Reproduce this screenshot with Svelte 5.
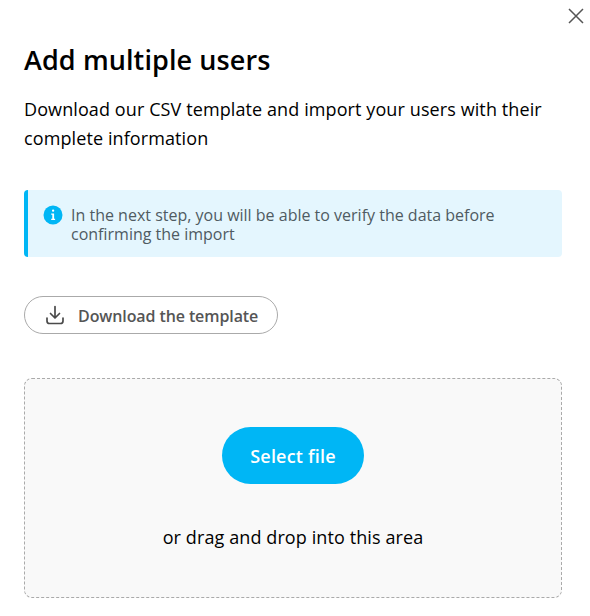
<script>
  const title = 'Add multiple users';
</script>

<div class="dialog">
  <button class="close" aria-label="Close">
    <svg width="16" height="16" viewBox="0 0 16 16"><path d="M1 1l14 14M15 1L1 15" stroke="#555" stroke-width="1.5" fill="none" /></svg>
  </button>
  <h1>{title}</h1>
  <p class="intro">Download our CSV template and import your users with their complete information</p>

  <div class="info">
    <svg class="info-icon" width="20" height="20" viewBox="0 0 20 20">
      <circle cx="10" cy="10" r="9.5" fill="#00b6f5" />
      <rect x="9" y="4.6" width="2.2" height="2.2" rx="1" fill="#fff" />
      <path d="M8.2 8.6h2.9v5.2h1v1.2H8.2v-1.2h1.1V9.8H8.2z" fill="#fff" />
    </svg>
    <span>In the next step, you will be able to verify the data before confirming the import</span>
  </div>

  <button class="download">
    <svg width="20" height="20" viewBox="0 0 20 20" fill="none" stroke="#4a4a4a" stroke-width="1.7" stroke-linecap="round" stroke-linejoin="round">
      <path d="M10 1.5v11M5.5 8.5l4.5 4.5 4.5-4.5" />
      <path d="M2 13v3a2.5 2.5 0 0 0 2.5 2.5h11A2.5 2.5 0 0 0 18 16v-3" />
    </svg>
    <span>Download the template</span>
  </button>

  <div class="drop">
    <button class="select">Select file</button>
    <p>or drag and drop into this area</p>
  </div>
</div>

<style>
  :global(body) {
    background: #fff;
  }

  .dialog {
    position: relative;
    box-sizing: border-box;
    height: 616px;
    padding: 41px 28px 18px 24px;
    font-family: "Open Sans", "Noto Sans", sans-serif;
    color: #000;
    overflow: hidden;
  }

  .close {
    position: absolute;
    top: 8px;
    right: 6px;
    padding: 0;
    border: none;
    background: none;
    line-height: 0;
  }

  h1 {
    margin: 0;
    font-size: 27px;
    line-height: 38px;
    font-weight: 600;
    letter-spacing: 0.1px;
  }

  .intro {
    margin: 16px 0 0;
    font-size: 18px;
    line-height: 29px;
    letter-spacing: 0.1px;
  }

  .info {
    display: flex;
    gap: 8px;
    margin-top: 37px;
    padding: 16px 20px 13px 15px;
    background: #e4f6fe;
    border-left: 4px solid #00b6f5;
    border-radius: 4px;
    font-size: 16px;
    line-height: 19px;
    color: #4f5b62;
  }

  .info-icon {
    flex: none;
    margin-top: -1px;
  }

  .download {
    display: flex;
    align-items: center;
    gap: 13px;
    box-sizing: border-box;
    width: 254px;
    height: 38px;
    margin-top: 39px;
    padding: 0 0 0 20px;
    background: #fff;
    border: 1px solid #aaa;
    border-radius: 19px;
    font: 600 16px "Open Sans", "Noto Sans", sans-serif;
    letter-spacing: -0.1px;
    color: #555;
  }

  .download span {
    padding-top: 2px;
  }

  .drop {
    display: flex;
    flex-direction: column;
    align-items: center;
    box-sizing: border-box;
    height: 220px;
    margin-top: 44px;
    padding-top: 48px;
    background: #f9f9f9;
    border: 1px dashed #aaa;
    border-radius: 8px;
  }

  .select {
    width: 142px;
    height: 57px;
    border: none;
    border-radius: 29px;
    background: #00b6f5;
    color: #fff;
    font: 600 18px "Open Sans", "Noto Sans", sans-serif;
    letter-spacing: 0.2px;
  }

  .drop p {
    margin: 40px 0 0;
    font-size: 18px;
    line-height: 26px;
    letter-spacing: 0.1px;
  }
</style>
